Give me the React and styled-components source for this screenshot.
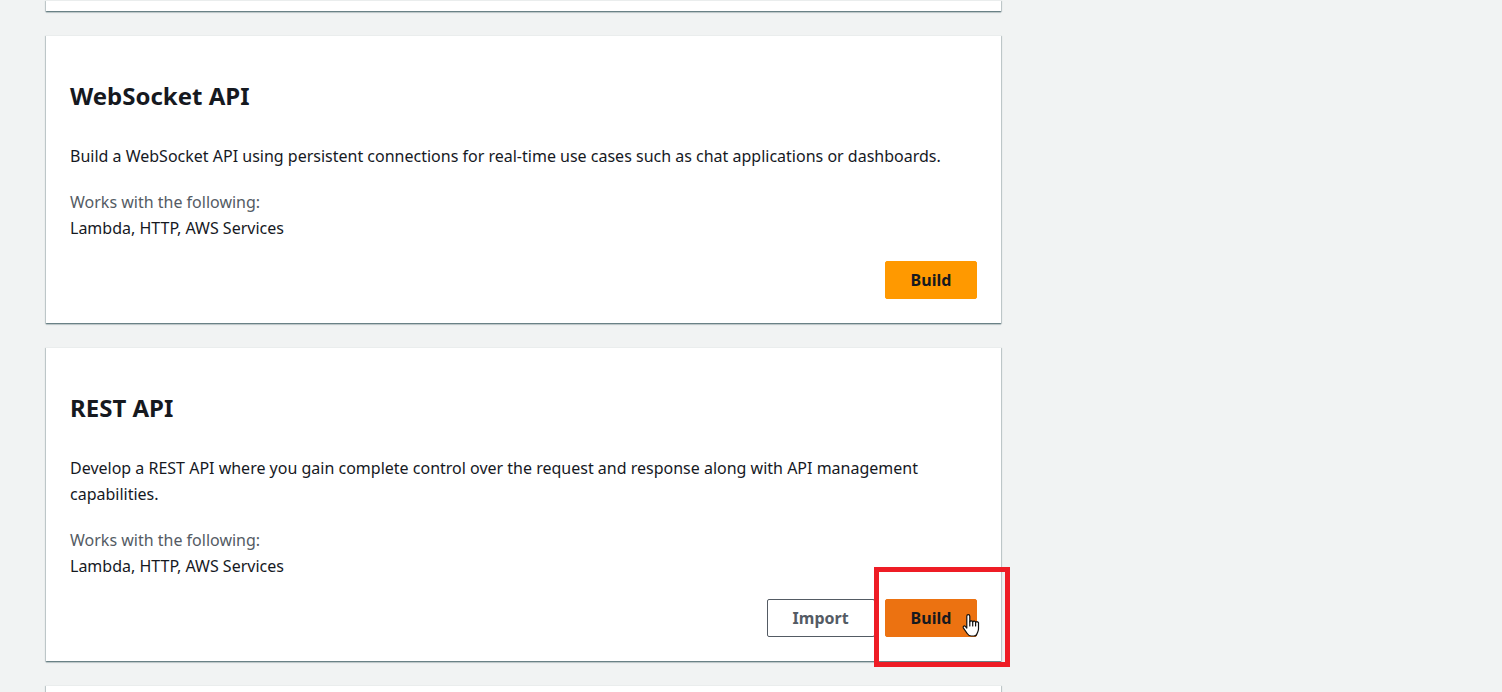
import React from "react";
import styled, { createGlobalStyle } from "styled-components";

const GlobalStyle = createGlobalStyle`
  * { box-sizing: border-box; }
  html { overflow: hidden; }
  body {
    margin: 0;
    background: #f1f3f3;
    color: #16191f;
    font: 16px/26px "Noto Sans", "Open Sans", sans-serif;
  }
`;

const Page = styled.main`
  display: flex;
  flex-direction: column;
  gap: 24px;
  width: calc(100% * 2 / 3);
  min-width: 480px;
  padding-left: 46px;
`;

const Card = styled.section`
  background: #fff;
  padding: 43px 24px 24px;
  border-top: 1px solid #eaeded;
  box-shadow:
    0 1px 1px rgba(0, 40, 50, 0.3),
    0 2px 1px rgba(0, 40, 50, 0.12),
    1px 1px 1px rgba(0, 40, 50, 0.15),
    -1px 1px 1px rgba(0, 40, 50, 0.15);
`;

const Edge = styled(Card)`
  padding: 10px 0 0;
`;

const Title = styled.h2`
  margin: 0 0 30px;
  font-size: 24px;
  line-height: 34px;
  font-weight: 700;
`;

const Text = styled.p`
  margin: 0 0 20px;
`;

const Muted = styled.span`
  display: block;
  color: #545b64;
`;

const Actions = styled.div`
  display: flex;
  justify-content: flex-end;
  gap: 10px;
`;

const Button = styled.button`
  display: block;
  height: 38px;
  padding: 0 25px;
  border: 1px solid ${(p) => p.$line};
  border-radius: 2px;
  background: ${(p) => p.$fill};
  color: ${(p) => p.$ink || "#16191f"};
  font: 700 16px/24px "Noto Sans", "Open Sans", sans-serif;
  cursor: pointer;
`;

const Spotlight = styled.div`
  position: relative;

  &::after {
    content: "";
    position: absolute;
    inset: -32px -33px -30px -11px;
    border: 5px solid #ee1c25;
    pointer-events: none;
  }
`;

const Pointer = styled.svg`
  position: absolute;
  right: -3px;
  bottom: 0;
  width: 18px;
  height: 24px;
  pointer-events: none;
`;

export default function App() {
  return (
    <>
      <GlobalStyle />
      <Page>
        <Edge />
        <Card>
          <Title>WebSocket API</Title>
          <Text>Build a WebSocket API using persistent connections for real-time use cases such as chat applications or dashboards.</Text>
          <Text><Muted>Works with the following:</Muted>Lambda, HTTP, AWS Services</Text>
          <Actions><Button $fill="#ff9900" $line="#ff9900">Build</Button></Actions>
        </Card>
        <Card>
          <Title>REST API</Title>
          <Text>Develop a REST API where you gain complete control over the request and response along with API management capabilities.</Text>
          <Text><Muted>Works with the following:</Muted>Lambda, HTTP, AWS Services</Text>
          <Actions>
            <Button $fill="#fff" $line="#545b64" $ink="#545b64">Import</Button>
            <Spotlight>
              <Button $fill="#ec7211" $line="#ec7211">Build</Button>
              <Pointer viewBox="0 0 18 24" aria-hidden="true">
                <path
                  d="M4.8 15V3.2a1.5 1.5 0 0 1 3 0v5.6a1.5 1.5 0 0 1 2.9.3 1.5 1.5 0 0 1 2.9.7 1.5 1.5 0 0 1 2.9 1v5.2c0 2-.9 3-1.4 4.500-.4 1.5-1.5 2.5-3.200 2.500H9.200c-2 0-3-1-4-2.500L1.300 14.800c-.6-1.300.8-2.400 2-1.400z"
                  fill="#fff" stroke="#111" strokeWidth="1.2" strokeLinejoin="round"
                />
                <path d="M7.8 8.8v4.2M10.7 9.2v3.8M13.6 10v3" stroke="#111" strokeWidth="1.2" fill="none" strokeLinecap="round" />
              </Pointer>
            </Spotlight>
          </Actions>
        </Card>
        <Edge />
      </Page>
    </>
  );
}
